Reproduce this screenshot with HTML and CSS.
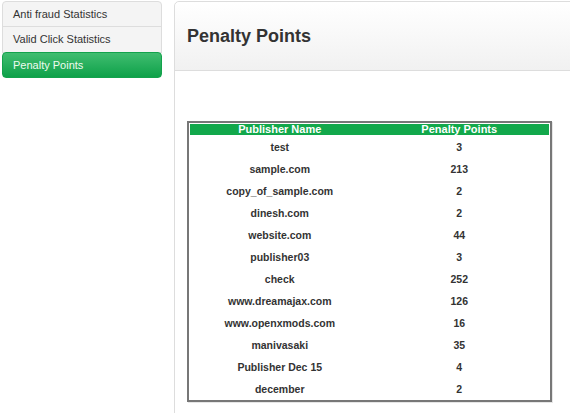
FILE: index.html
```html
<!DOCTYPE html>
<html lang="en">
<head>
  <meta charset="UTF-8" />
  <title>Penalty Points</title>
  <link rel="stylesheet" href="styles.css">
</head>
<body>
  <div class="layout">
    <!-- left menu -->
    <ul class="side-nav">
      <li class="side-item">Anti fraud Statistics</li>
      <li class="side-item">Valid Click Statistics</li>
      <li class="side-item active">Penalty Points</li>
    </ul>

    <div class="panel">
      <div class="panel-head"><h1>Penalty Points</h1></div>
      <div class="panel-body">
        <table class="points">
          <thead>
            <tr><th>Publisher Name</th><th>Penalty Points</th></tr>
          </thead>
          <tbody>
            <tr><td>test</td><td>3</td></tr>
            <tr><td>sample.com</td><td>213</td></tr>
            <tr><td>copy_of_sample.com</td><td>2</td></tr>
            <tr><td>dinesh.com</td><td>2</td></tr>
            <tr><td>website.com</td><td>44</td></tr>
            <tr><td>publisher03</td><td>3</td></tr>
            <tr><td>check</td><td>252</td></tr>
            <tr><td>www.dreamajax.com</td><td>126</td></tr>
            <tr><td>www.openxmods.com</td><td>16</td></tr>
            <tr><td>manivasaki</td><td>35</td></tr>
            <tr><td>Publisher Dec 15</td><td>4</td></tr>
            <tr><td>december</td><td>2</td></tr>
          </tbody>
        </table>
      </div>
    </div>
  </div>
</body>
</html>
```

FILE: styles.css
```css
html, body {
  margin: 0;
  padding: 0;
  background: #fff;
  overflow: hidden;
  font-family: 'Liberation Sans', Arial, sans-serif;
  color: #333;
}
.layout {
  display: flex;
  align-items: flex-start;
  padding: 1px 0 0 2px;
}
.side-nav {
  list-style: none;
  margin: 0;
  padding: 0;
  width: 160px;
  flex: none;
}
.side-item {
  height: 25px;
  line-height: 24px;
  padding-left: 10px;
  font-size: 11px;
  color: #333;
  background: #f4f4f4;
  border: 1px solid #ddd;
  margin-top: -1px;
}
.side-item:first-child {
  height: 24px;
  margin-top: 0;
  border-radius: 4px 4px 0 0;
}
.side-item.active {
  height: 24px;
  color: #eefbef;
  border-color: #13a24c;
  border-radius: 4px;
  background: linear-gradient(#40bd70, #0ea149);
}
.panel {
  flex: 1;
  margin-left: 12px;
  margin-right: -10px;
  min-height: 420px;
  border: 1px solid #ddd;
  border-radius: 5px 0 0 0;
}
.panel-head {
  height: 68px;
  padding-left: 12px;
  border-bottom: 1px solid #ddd;
  background: linear-gradient(#fff, #f1f1f1);
  border-radius: 5px 0 0 0;
}
.panel-head h1 {
  margin: 0;
  padding-top: 23px;
  font-size: 18px;
  line-height: 22px;
  color: #333;
}
.panel-body {
  padding: 50px 0 0 12px;
}
.points {
  width: 365px;
  padding: 1px 1px 0 1px;
  border: 2px solid #777;
  border-spacing: 0;
  box-shadow: 1px 1px 0 #e6e6e6;
  font-size: 11px;
}
.points th {
  height: 11px;
  padding: 0 0 1px;
  line-height: 11px;
  background: #12a84b;
  background-clip: content-box;
  color: #fff;
  width: 50%;
}
.points td {
  height: 22px;
  padding: 0;
  text-align: center;
  font-size: 10.5px;
  font-weight: bold;
  color: #333;
}
```
